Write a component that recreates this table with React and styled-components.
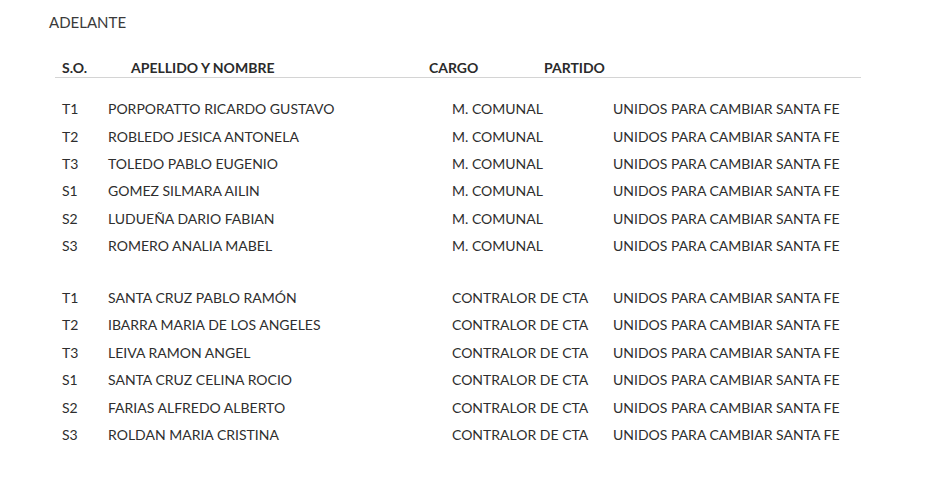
import React from "react";
import styled, { createGlobalStyle } from "styled-components";

const GlobalStyle = createGlobalStyle`
  html, body {
    margin: 0;
    padding: 0;
    background: #ffffff;
  }
  body {
    font-family: Lato, "Open Sans", sans-serif;
    color: #333333;
  }
`;

const groups = [
  {
    cargo: "M. COMUNAL",
    rows: [
      ["T1", "PORPORATTO RICARDO GUSTAVO"],
      ["T2", "ROBLEDO JESICA ANTONELA"],
      ["T3", "TOLEDO PABLO EUGENIO"],
      ["S1", "GOMEZ SILMARA AILIN"],
      ["S2", "LUDUEÑA DARIO FABIAN"],
      ["S3", "ROMERO ANALIA MABEL"],
    ],
  },
  {
    cargo: "CONTRALOR DE CTA",
    rows: [
      ["T1", "SANTA CRUZ PABLO RAMÓN"],
      ["T2", "IBARRA MARIA DE LOS ANGELES"],
      ["T3", "LEIVA RAMON ANGEL"],
      ["S1", "SANTA CRUZ CELINA ROCIO"],
      ["S2", "FARIAS ALFREDO ALBERTO"],
      ["S3", "ROLDAN MARIA CRISTINA"],
    ],
  },
];

function App() {
  return (
    <Page>
      <GlobalStyle />
      <Title>ADELANTE</Title>
      <HeaderRow>
        <HeadCell $w={69}>S.O.</HeadCell>
        <HeadCell $w={298}>APELLIDO Y NOMBRE</HeadCell>
        <HeadCell $w={115}>CARGO</HeadCell>
        <HeadCell>PARTIDO</HeadCell>
      </HeaderRow>
      {groups.map((g, gi) => (
        <Group key={gi} $first={gi === 0}>
          {g.rows.map(([so, name]) => (
            <Row key={so + name}>
              <Cell>{so}</Cell>
              <Cell>{name}</Cell>
              <Cell>{g.cargo}</Cell>
              <Cell>UNIDOS PARA CAMBIAR SANTA FE</Cell>
            </Row>
          ))}
        </Group>
      ))}
    </Page>
  );
}

const Page = styled.div`
  width: 950px;
  height: 504px;
  box-sizing: border-box;
  padding: 12px 0 0 49px;
  display: flex;
  flex-direction: column;
`;

const Title = styled.div`
  font-size: 15px;
  line-height: 20px;
  color: #3a3a3a;
`;

const HeaderRow = styled.div`
  margin-top: 25px;
  width: 806px;
  margin-left: 6px;
  box-sizing: border-box;
  padding-left: 7px;
  display: flex;
  height: 21px;
  align-items: center;
  border-bottom: 1.5px solid #d4d4d4;
`;

const HeadCell = styled.div`
  flex: 0 0 ${(p) => (p.$w ? `${p.$w}px` : "auto")};
  font-weight: 700;
  font-size: 14px;
  color: #2b2b2b;
`;

const Group = styled.div`
  display: flex;
  flex-direction: column;
  margin-top: ${(p) => (p.$first ? "17px" : "24.5px")};
  padding-left: 13px;
`;

const Row = styled.div`
  display: grid;
  grid-template-columns: 46px 344px 161px auto;
  height: 27.4px;
  align-items: center;
`;

const Cell = styled.div`
  font-size: 14px;
  color: #2e2e2e;
  white-space: nowrap;
`;

export default App;
